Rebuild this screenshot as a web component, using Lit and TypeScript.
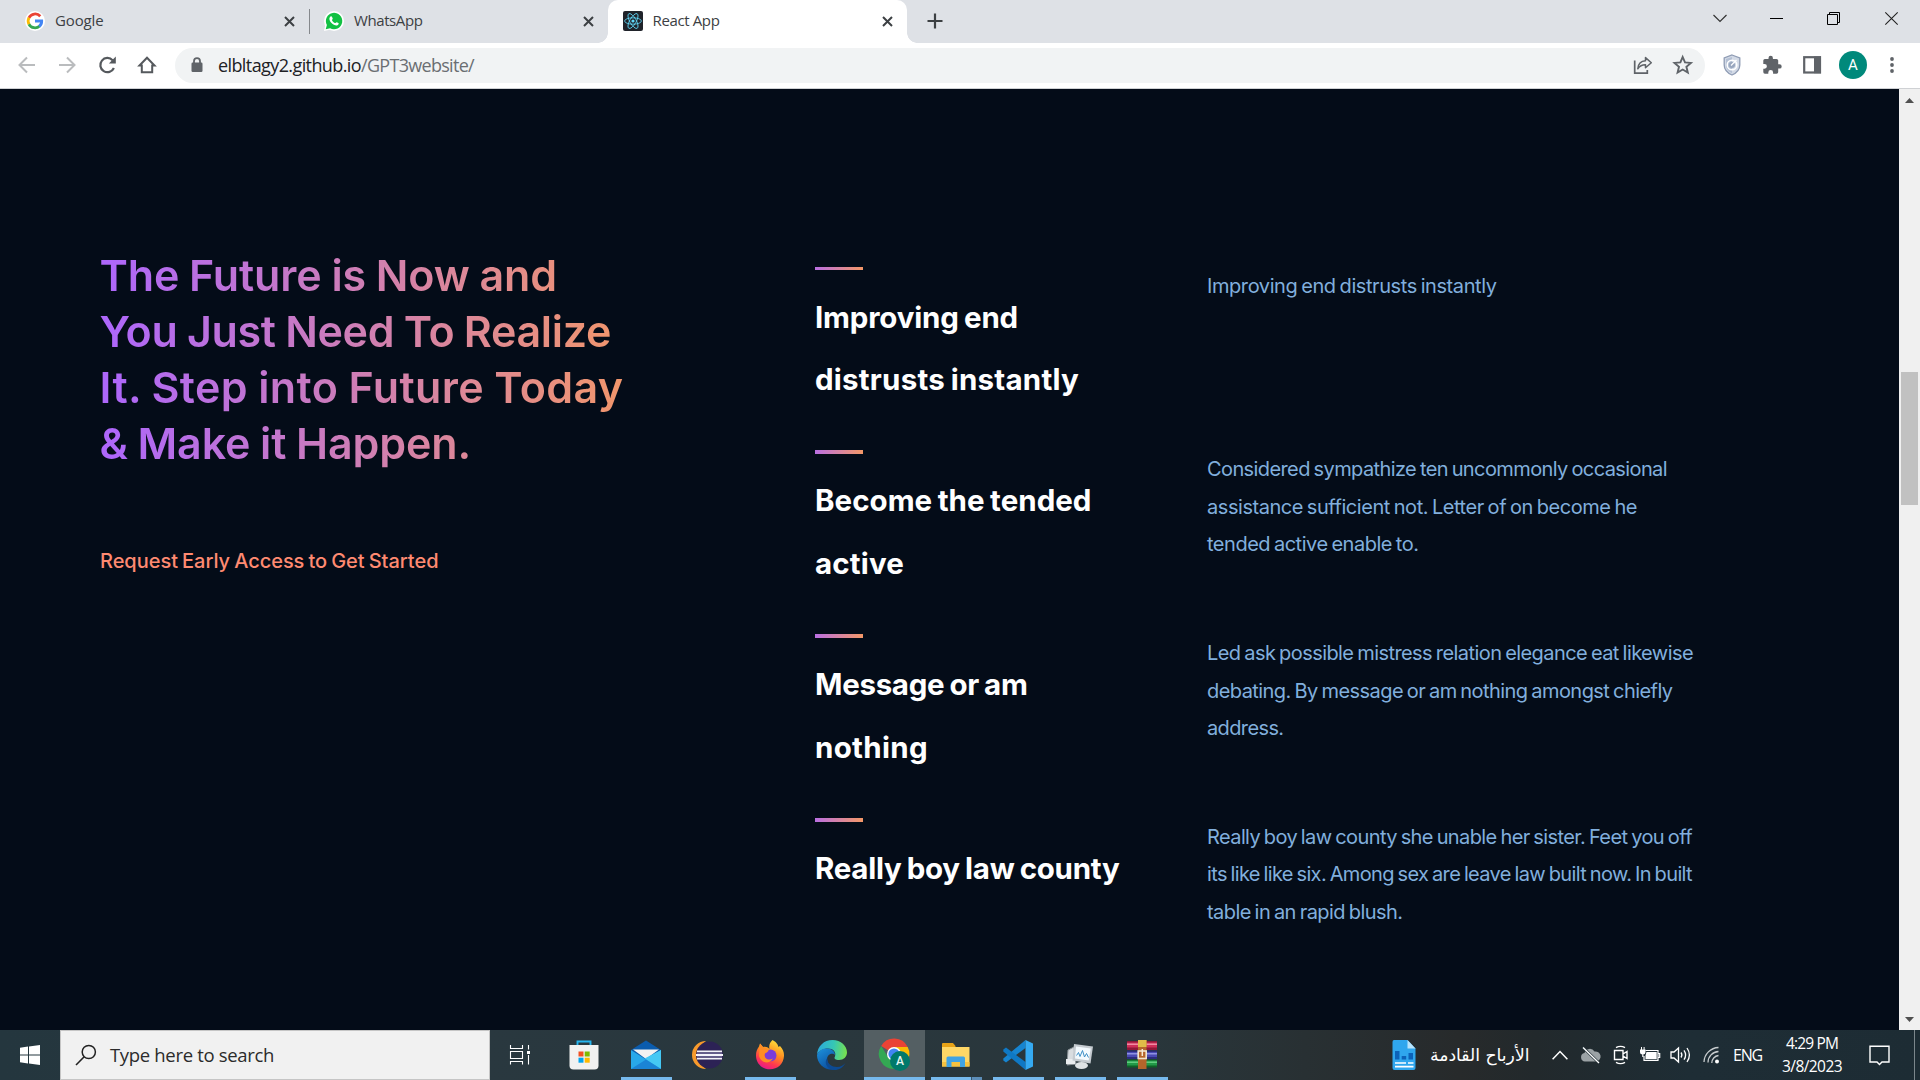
import { LitElement, html, css, svg } from "lit";
import { customElement } from "lit/decorators.js";

type Line = [text: string, width: number];

const HEADLINE: Line[] = [
  ["The Future is Now and", 457.5],
  ["You Just Need To Realize", 511.5],
  ["It. Step into Future Today", 524],
  ["& Make it Happen.", 371.5],
];

const FEATURES: { title: Line[]; text: Line[] }[] = [
  {
    title: [["Improving end", 203], ["distrusts instantly", 264]],
    text: [["Improving end distrusts instantly", 289.5]],
  },
  {
    title: [["Become the tended", 276.5], ["active", 89]],
    text: [
      ["Considered sympathize ten uncommonly occasional", 460],
      ["assistance sufficient not. Letter of on become he", 430],
      ["tended active enable to.", 211.5],
    ],
  },
  {
    title: [["Message or am", 212.5], ["nothing", 113]],
    text: [
      ["Led ask possible mistress relation elegance eat likewise", 486],
      ["debating. By message or am nothing amongst chiefly", 465.5],
      ["address.", 76.5],
    ],
  },
  {
    title: [["Really boy law county", 304.5]],
    text: [
      ["Really boy law county she unable her sister. Feet you off", 485],
      ["its like like six. Among sex are leave law built now. In built", 485],
      ["table in an rapid blush.", 195.5],
    ],
  },
];

/** A run of text tracked out or in to fill the given width. */
const run = (text: string, width: number, cls = "") =>
  html`<span class="run ${cls}" data-width=${width}>${text}</span>`;

const lines = (list: Line[]) => list.map(([t, w], i) => html`${i ? html`<br />` : ""}${run(t, w)}`);

const icon = (w: number, h: number, body: unknown, cls = "") =>
  html`<svg class=${cls} width=${w} height=${h} viewBox="0 0 ${w} ${h}" fill="none">${body}</svg>`;

const closeX = icon(11, 11, svg`<path d="M1 1 10 10M10 1 1 10" stroke="#3c4043" stroke-width="2"/>`);

const googleIcon = icon(20, 20, svg`
  <circle cx="10" cy="10" r="10" fill="#fff"/>
  <path d="M15.300 5.200A7 7 0 0 0 3.900 6.800" stroke="#ea4335" stroke-width="2.800"/>
  <path d="M4 6.700A7 7 0 0 0 4 13.300" stroke="#fbbc05" stroke-width="2.800"/>
  <path d="M3.900 13.200A7 7 0 0 0 14.700 15" stroke="#34a853" stroke-width="2.800"/>
  <path d="M10 10H16.700A6.600 6.600 0 0 1 14.200 15.400" stroke="#4285f4" stroke-width="2.800"/>`);

const whatsappIcon = icon(20, 20, svg`
  <circle cx="10" cy="10" r="10" fill="#fff"/><path d="M0 20 1.500 13 7 18.500Z" fill="#fff"/>
  <path d="M1.700 18.300 2.900 14A8.200 8.200 0 1 1 6.100 17.200Z" fill="#12c143"/>
  <path d="M6.300 5.700C7 5 7.800 5.200 8.100 6l.6 1.500c.2.600-.9 1.300-.7 1.700.7 1.400 1.700 2.300 3.100 2.900.5.100 1.100-1.200 1.700-.9l1.600.8c.8.500 0 2.200-1.400 2.500C9.600 15 5 10.500 5.400 7.500c.1-.8.400-1.300.9-1.800Z" fill="#fff"/>`);

const reactIcon = icon(20, 20, svg`
  <rect width="20" height="20" rx="2" fill="#20232a"/>
  <g stroke="#61dafb" stroke-width=".8"><ellipse cx="10" cy="10" rx="8.400" ry="3.200"/>
  <ellipse cx="10" cy="10" rx="8.400" ry="3.200" transform="rotate(60 10 10)"/>
  <ellipse cx="10" cy="10" rx="8.400" ry="3.200" transform="rotate(120 10 10)"/></g>
  <circle cx="10" cy="10" r="1.600" fill="#61dafb"/>`);

const backIcon = icon(18, 18, svg`<path d="M17 9H2M9 1.500 1.500 9 9 16.500" stroke="#babcbe" stroke-width="2"/>`);
const forwardIcon = icon(18, 18, svg`<path d="M1 9H16M9 1.500 16.500 9 9 16.500" stroke="#babcbe" stroke-width="2"/>`);
const reloadIcon = icon(18, 18, svg`
  <path d="M15.900 12A7.100 7.100 0 1 1 14.600 4.200" stroke="#55595d" stroke-width="2.200"/>
  <path d="M17.800 .6V7.500H10.900Z" fill="#55595d"/>`);
const homeIcon = icon(18, 18, svg`<path d="M1.500 9.500 9 1.800 16.500 9.500H14.200V16.300H3.800V9.500Z" stroke="#55595d" stroke-width="2"/>`);
const lockIcon = icon(12, 16, svg`
  <rect x=".5" y="5.500" width="11" height="9.500" rx="1.200" fill="#5f6368"/>
  <path d="M3 6.500V4.200a3 3 0 0 1 6 0V6.500" stroke="#5f6368" stroke-width="1.800"/>`);

const shareIcon = icon(20, 20, svg`
  <path d="M1.700 5.500V18.100H14.300V15" stroke="#5f6368" stroke-width="1.700"/>
  <path d="M4.800 13.700C5.200 8.600 8 6 12.500 5.700V2.600L18.300 7.800 12.500 12.800V9.800C9 9.700 6.700 11 4.800 13.700Z" stroke="#5f6368" stroke-width="1.500" stroke-linejoin="round"/>`);
const starIcon = icon(20, 20, svg`<path d="M9.700 2 12 7.400 17.900 7.900 13.400 11.800 14.800 17.600 9.700 14.500 4.600 17.600 6 11.800 1.500 7.900 7.400 7.400Z" stroke="#5f6368" stroke-width="1.900"/>`);
const shieldIcon = icon(18, 22, svg`
  <path d="M9 1 16.800 4V11C16.800 15.500 13.500 19 9 21 4.500 19 1.200 15.500 1.200 11V4Z" fill="#d3dae6" stroke="#8f9cb4" stroke-width="1.300"/>
  <path d="M9 3 3 5V11c0 4 2.500 6.500 6 8Z" fill="#b4c0d4"/>
  <circle cx="9" cy="11" r="4.800" stroke="#fff" stroke-width="1.500"/>
  <circle cx="9" cy="11" r="3" fill="#98a6be"/><path d="M8 11.500 13.500 6" stroke="#fff" stroke-width="1.200"/>`, "shield");
const puzzleIcon = icon(20, 20, svg`<path d="M17.500 9.200H16.200V5.600A1.700 1.700 0 0 0 14.500 3.900H10.900V2.900A2.200 2.200 0 0 0 6.500 2.900V3.900H2.900A1.600 1.600 0 0 0 1.300 5.500V8.900H2.500A2.400 2.400 0 0 1 2.500 13.700H1.300V17.100A1.600 1.600 0 0 0 2.900 18.700H6.300V17.400A2.400 2.400 0 0 1 11.100 17.400V18.700H14.500A1.700 1.700 0 0 0 16.200 17V13.600H17.500A2.200 2.200 0 0 0 17.500 9.200Z" fill="#5f6368"/>`);
const panelIcon = icon(20, 20, svg`<rect x="2.200" y="2.200" width="15.800" height="15.300" stroke="#5f6368" stroke-width="2.200"/><path d="M12 1.500H19V18.200H12Z" fill="#5f6368"/>`);
const dotsIcon = icon(4, 18, svg`<circle cx="2" cy="3" r="1.900" fill="#5f6368"/><circle cx="2" cy="9" r="1.900" fill="#5f6368"/><circle cx="2" cy="15" r="1.900" fill="#5f6368"/>`, "dots");

const caretIcon = icon(14, 9, svg`<path d="M.5 1 7 7.500 13.500 1" stroke="#333" stroke-width="1.200"/>`);
const minIcon = icon(13, 13, svg`<path d="M0 6.500H13" stroke="#000"/>`);
const restoreIcon = icon(13, 13, svg`<path d="M.5 2.500H10.500V12.500H.5ZM2.500 2.500V.5H12.500V10.500H10.500" stroke="#000"/>`);
const winCloseIcon = icon(13, 13, svg`<path d="M1.300 .3 13.700 12.700M13.700 .3 1.300 12.700" stroke="#222" stroke-width="1.100"/>`);

const startIcon = icon(20, 20, svg`<path d="M0 2.700 8 1.600V9.500H0ZM9 1.400 20 0V9.500H9ZM0 10.500H8V18.400L0 17.300ZM9 10.500H20V20L9 18.600Z" fill="#fff"/>`);
const searchIcon = icon(22, 22, svg`<circle cx="13.800" cy="8" r="6.600" stroke="#222" stroke-width="1.500"/><path d="M9.200 12.800 1 21" stroke="#222" stroke-width="1.600"/>`);
const taskviewIcon = icon(22, 20, svg`
  <path d="M.5 0V3.500H12.500V0M.5 19.500V16.500H12.500V19.500M.5 6.500H12.500V13.500H.5ZM18.500 0V4.500M18.500 10V19.500" stroke="#fff" stroke-width="1.100"/>
  <rect x="17" y="6" width="3" height="3" fill="#fff"/>`);

const storeIcon = icon(30, 30, svg`
  <path d="M8.500 5V1.500H21.500V5" stroke="#26b5ef" stroke-width="1.900"/>
  <path d="M.5 5H29.500V25.500Q29.500 29.500 25.500 29.500H4.500Q.5 29.500 .5 25.500Z" fill="#f1f1f1"/>
  <path d="M9.500 11.500h5v5h-5Z" fill="#f25022"/><path d="M15.700 11.500h5v5h-5Z" fill="#7fba00"/>
  <path d="M9.500 17.700h5v5h-5Z" fill="#00a4ef"/><path d="M15.700 17.700h5v5h-5Z" fill="#ffb900"/>`);
const mailIcon = icon(30, 30, svg`
  <path d="M0 10 15 .5 30 10 15 22Z" fill="#0b5cad"/><path d="M2 9.500H28L15 19Z" fill="#f2f2f2"/>
  <path d="M0 10 15 19.500 30 10V29H0Z" fill="#28a8ea"/><path d="M30 10V29L13.500 18.500Z" fill="#45c8f4"/>
  <path d="M0 29 15 19.500 30 29Z" fill="#1b84d6"/>`);
const eclipseIcon = icon(30, 30, svg`
  <path d="M13 1A14 14 0 0 0 13 29 17 17 0 0 1 13 1Z" fill="#f79a2c"/>
  <circle cx="16.500" cy="15" r="13.500" fill="#2c2255"/>
  <path d="M4 11.400H29M3 15H30M4 18.600H29" stroke="#f4f2fa" stroke-width="1.900"/>
  <path d="M4 13.200H29M4 16.800H29" stroke="#7d74a5" stroke-width="1"/>`);
const firefoxIcon = icon(30, 30, svg`
  <defs><linearGradient id="ff" x1=".75" y1="0" x2=".3" y2="1"><stop offset="0" stop-color="#ffe43c"/><stop offset=".45" stop-color="#ff8a20"/><stop offset=".75" stop-color="#ff3750"/><stop offset="1" stop-color="#e5178e"/></linearGradient></defs>
  <path d="M17.500 0C22 2.500 23 5 23.500 7L25 6C28 9 29.200 12.500 29 16 28.500 24 22.500 29.300 15 29.300 7.500 29.300 1.300 24 1 16 .9 12 2 9 4 6.500L5 3.500 8 7C11 6.500 12.500 7 14.500 9 13.500 6 15 2 17.500 0Z" fill="url(#ff)"/>
  <circle cx="15.500" cy="15.500" r="6" fill="#7b3cda"/>
  <path d="M5 3.500 8 7 13.500 9.500C14 12 11 12.500 9.500 14 9 18 13 21 18 18.500 14 25 6 23 4 16Z" fill="#ff8d25"/>`);
const edgeIcon = icon(30, 30, svg`
  <defs><linearGradient id="e1" x1="0" y1=".3" x2="1" y2=".4"><stop offset="0" stop-color="#2ba8dd"/><stop offset=".55" stop-color="#36c7b4"/><stop offset="1" stop-color="#77e04f"/></linearGradient>
  <linearGradient id="e2" x1="0" y1="0" x2=".6" y2="1"><stop offset="0" stop-color="#1d92dc"/><stop offset="1" stop-color="#0b4e9e"/></linearGradient></defs>
  <path d="M0 15C.5 6 7 0 15.500 0 24 0 30 6 30 12.500 30 17 26.500 20 22 20 18.500 20 16.500 18.700 18 16.500 19.500 12 16 8.500 11 8.500 6 8.500 1.500 11 0 15Z" fill="url(#e1)"/>
  <path d="M0 15C2 9.500 7 8 11 8.500 15 9 18 11.500 18 15 16 12.500 10.500 13.500 10 19 10 24 15 29 20 29.300 9 32 0 24.500 0 15Z" fill="url(#e2)"/>
  <path d="M10.200 18C10 24 15 27 20 27 24 27 26.500 25 28.500 23 26 27.500 22 30 17.500 30 10 29.500 6.500 22.500 10.200 18Z" fill="#0c4a93"/>`);
const chromeIcon = html`<span class="chrome">${icon(32, 32, svg`
  <path d="M2.200 7A15 15 0 0 1 28.700 8H15V15Z" fill="#ea4335"/><path d="M28.700 8A15 15 0 0 1 15 30L21 18 15 8Z" fill="#fbbc04"/>
  <path d="M2.200 7A15 15 0 0 0 15 30L21 19 9 18Z" fill="#34a853"/>
  <circle cx="15" cy="15" r="7" fill="#fff"/><circle cx="15" cy="15" r="5.600" fill="#4285f4"/>`)}<span class="badge">A</span></span>`;
const explorerIcon = icon(28, 26, svg`
  <path d="M0 2Q0 1 1 1H11L13.500 4V8H0Z" fill="#e8a317"/><path d="M0 5H27.500V24.500H0Z" fill="#ffd766"/>
  <path d="M0 20H27.500V24.500H0Z" fill="#f7c23f"/>
  <path d="M4.500 25V16Q4.500 14.500 6 14.500H21.500Q23 14.500 23 16V25H18V20H9.500V25Z" fill="#40a3e4"/>`);
const vscodeIcon = icon(30, 30, svg`
  <path d="M22.500 0V8L3 22.500 .3 20.500V18.500Z" fill="#1684d0"/>
  <path d="M.3 11.500V9.500L3 7.500 22.500 22V30Z" fill="#0f78c4"/>
  <path d="M22.500 0 30 3.500V26.500L22.500 30Z" fill="#35aaf2"/>`);
const monitorIcon = icon(28, 30, svg`
  <path d="M2 10 8 7 10 24 1 25Z" fill="#d9dde0" stroke="#8b9297"/><path d="M0 19H9V24H0Z" fill="#e9ecee"/>
  <path d="M8 4 27 6.500 24.500 23.500 6.500 20.500Z" fill="#c5cbd0"/><path d="M10 6.500 24.800 8.500 22.700 20.500 9 18.500Z" fill="#f3fafe"/>
  <path d="M10.500 15.500 12.500 12.500 14 16.500 16.500 10.500 18.500 17 20.500 13.500 22.500 17.500" stroke="#3d8fc6" stroke-width="1"/>
  <ellipse cx="15.500" cy="25.500" rx="6.500" ry="3.500" fill="#dfe3e5"/>`);
const winrarIcon = icon(30, 30, svg`
  <rect y="1" width="30" height="9" fill="#8f1838"/><rect y="2.500" width="30" height="5" fill="#cf2f59"/><rect y="3.500" width="30" height="1.500" fill="#f08ba3"/>
  <rect y="10.500" width="30" height="8.500" fill="#2c2c7c"/><rect y="12" width="30" height="5" fill="#4a4ab4"/><rect y="13" width="30" height="1.500" fill="#8f91e0"/>
  <rect y="19.500" width="30" height="8" fill="#0f6128"/><rect y="20.500" width="30" height="5" fill="#239a48"/><rect y="21.500" width="30" height="1.500" fill="#62cc80"/>
  <rect x="11" y="0" width="8.500" height="29" fill="#b5652b"/><rect x="11" y="0" width="8.500" height="7" fill="#e0bb48"/>
  <rect x="11.200" y="11" width="8" height="7.500" stroke="#f0e4cc" stroke-width="1.600"/><path d="M15.300 9V16" stroke="#f5ebd9" stroke-width="1.500"/>`);

const APPS: { icon: unknown; state: string }[] = [
  { icon: storeIcon, state: "" },
  { icon: mailIcon, state: "open" },
  { icon: eclipseIcon, state: "" },
  { icon: firefoxIcon, state: "open" },
  { icon: edgeIcon, state: "" },
  { icon: chromeIcon, state: "active" },
  { icon: explorerIcon, state: "open multi" },
  { icon: vscodeIcon, state: "open" },
  { icon: monitorIcon, state: "open" },
  { icon: winrarIcon, state: "open" },
];

const newsIcon = icon(24, 32, svg`
  <path d="M2 1H15.500L23.500 9.500V29Q23.500 31 21.500 31H2.500Q.5 31 .5 29V3Q.5 1 2 1Z" fill="#2fa6ee"/>
  <path d="M15.500 1 23.500 9.500H15.500Z" fill="#b9e3fb"/><path d="M3 12H7.500V20.500H3ZM9.700 17H14.200V20.500H9.700ZM16.500 14H21V20.500H16.500Z" fill="#0c62b8"/>
  <path d="M3 24H14M16 24H21.500M3 27.700H21.500" stroke="#fff" stroke-width="1.700"/>`);
const upIcon = icon(16, 10, svg`<path d="M.6 9.300 8 1.500 15.400 9.300" stroke="#fff" stroke-width="1.500"/>`);
const cloudIcon = icon(21, 18, svg`<path d="M5 15.500A4.300 4.300 0 0 1 4.500 7 5.500 5.500 0 0 1 14.500 5.500 5 5 0 0 1 16.500 15.500Z" fill="#9ba2a5"/><path d="M2.500 1 19 17" stroke="#26343b" stroke-width="2.600"/><path d="M3 1.500 19 17" stroke="#fff" stroke-width="1.300"/>`);
const camIcon = icon(16, 20, svg`<path d="M1.500 5.500H10V14.500H1.500ZM10 9 14 6.500V13.500L10 11M3 2.700Q7.500 0 12 2.700M3 17.300Q7.500 20 12 17.300" stroke="#fff" stroke-width="1.400"/>`);
const batteryIcon = icon(21, 16, svg`<path d="M5.500 3.500H18V13.300H4V9M18 6.500H19.700V10.500H18" stroke="#fff" stroke-width="1.200"/><path d="M6.500 5H16.700V12H5.500V8.500Z" fill="#fff"/><path d="M0 2.500H5.500V5Q5.500 7.500 2.800 7.500 0 7.500 0 5ZM1 0H2V2.500H1ZM3.600 0H4.600V2.500H3.600ZM2.200 7H3.400V10H2.200Z" fill="#fff"/>`);
const volumeIcon = icon(22, 18, svg`<path d="M1 6H4L8.500 2V16L4 12H1Z" stroke="#fff" stroke-width="1.300"/><path d="M11 6.500Q12.800 9 11 11.500M14 4.300Q17.200 9 14 13.700M17 2Q21.800 9 17 16" stroke="#fff" stroke-width="1.300"/>`);
const wifiIcon = icon(17, 18, svg`<path d="M1 16A15 15 0 0 1 15.500 1.500M5 16.500A11 11 0 0 1 15.500 5.500M8.800 17A7.500 7.500 0 0 1 15.500 9.500" stroke="#c8cdcf" stroke-width="1.300"/><circle cx="14" cy="15.500" r="2" fill="#fff"/>`);
const noteIcon = icon(21, 21, svg`<path d="M1 1.200H20V17H13L10.500 19.500 8 17H1Z" stroke="#fff" stroke-width="1.400"/>`);

@customElement("app-root")
export class AppRoot extends LitElement {
  static styles = css`
    :host { display: block; width: 1920px; height: 1080px; overflow: hidden; font-family: "Open Sans", "Noto Sans", sans-serif; }
    * { box-sizing: border-box; }
    svg { display: block; flex: none; overflow: visible; }
    .run { white-space: pre; }
    .screen { display: flex; flex-direction: column; height: 1080px; }

    .tabs { display: flex; height: 43px; background: #dee1e6; color: #3c4043; font-size: 15px; line-height: 20px; }
    .tab { display: flex; align-items: center; width: 299px; height: 43px; padding: 0 14px 1px 15px; gap: 10px; position: relative; }
    .tab .run { padding-bottom: 2px; }
    .tab.first { width: 309px; padding-left: 25px; }
    .tab svg:last-child { margin-left: auto; }
    .tab.first::after { content: ""; position: absolute; right: -1px; top: 9px; width: 1px; height: 25px; background: #85888c; }
    .tab.current { background: #fff; border-radius: 10px 10px 0 0; gap: 9.500px; }
    .tab.current::before, .tab.current::after { content: ""; position: absolute; bottom: 0; width: 10px; height: 10px; }
    .tab.current::before { left: -10px; background: radial-gradient(circle at 0 0, #dee1e6 9.500px, #fff 10px); }
    .tab.current::after { right: -10px; background: radial-gradient(circle at 100% 0, #dee1e6 9.500px, #fff 10px); }
    .newtab { display: flex; align-items: center; padding: 0 0 1px 20px; }
    .window { display: flex; margin-left: auto; height: 37px; align-items: center; padding-right: 1px; }
    .window span { width: 57px; display: flex; justify-content: center; }

    .toolbar { display: flex; align-items: center; height: 46px; padding: 0 25px 1px 0; background: #fff; border-bottom: 1px solid #cfd1d4; flex: none; }
    .nav { display: flex; gap: 22px; padding-left: 18px; width: 175px; flex: none; }
    .omnibox { display: flex; align-items: center; width: 1530px; height: 35px; border-radius: 18px; background: #f1f3f4; padding: 0 12px 0 16px; font-size: 18px; color: #202124; flex: none; }
    .omnibox .url { margin-left: 15px; white-space: nowrap; line-height: 24px; }
    .path { color: #6a6e72; }
    .omnibox .acts { margin-left: auto; display: flex; gap: 20px; }
    .ext { display: flex; align-items: center; margin-left: 18px; gap: 20px; }
    .ext .shield { margin-right: 1px; }
    .ext .avatar { margin-left: -3px; }
    .ext .dots { margin-left: 3px; }
    .avatar { width: 28px; height: 28px; border-radius: 50%; background: #00897b; color: #fff; text-align: center; font: 15px/28px Roboto, sans-serif; }

    .view { display: flex; height: 941px; flex: none; }
    .page { flex: 1; background: #040c18; overflow: hidden; display: grid; grid-template-columns: 715px 1fr; padding-left: 100px; font-family: Inter, sans-serif; }
    .lead { padding-top: 157.700px; }
    .headline { margin: 0; width: 526px; font-weight: 600; font-size: 43px; line-height: 56px; word-spacing: -1px; color: transparent; background: linear-gradient(89.970deg, #ae67fa 1.840%, #f49867 102.670%); -webkit-background-clip: text; background-clip: text; }
    .headline .run { margin-left: -.5px; }
    .cta { margin: 72px 0 0; font-size: 20px; line-height: 37px; font-weight: 500; word-spacing: -1.200px; color: #ff8a71; }
    .features { padding-top: 177.700px; display: grid; grid-auto-rows: 183.750px; align-content: start; }
    .feature { display: grid; grid-template-columns: 392px 1fr; }
    .rule { width: 48px; height: 3.750px; background: linear-gradient(89.970deg, #ae67fa -20%, #f49867 100%); }
    .title { margin: 15.100px 0 0; font-size: 29.500px; line-height: 62.600px; font-weight: 700; word-spacing: -1.500px; color: #fff; }
    .text { margin: .9px 0 0; font-size: 20px; line-height: 37.500px; word-spacing: -1.300px; color: #81afdd; }

    .scroll { width: 21px; background: #f0f0f0; display: flex; flex-direction: column; align-items: center; justify-content: space-between; padding: 9px 0 8px; }
    .thumb { width: 17px; height: 133px; background: #c1c1c1; margin-bottom: 243px; }

    .taskbar { display: flex; height: 50px; background: linear-gradient(90deg, #24363e 0, #29383f 25%, #29363b 60%, #272a2b 76%, #22292c 80%, #1e2d35 88%, #1d2c34 100%); color: #fff; }
    .start { width: 60px; display: grid; place-items: center; }
    .search { display: flex; align-items: center; width: 430px; background: #f1f1f1; border: 1px solid #c5c5c5; color: #2b2b2b; font-size: 18.500px; padding-left: 14px; gap: 13px; }
    .search .run { padding-bottom: 2px; }
    .taskview { width: 63px; padding-left: 20px; display: flex; align-items: center; }
    .apps { display: grid; grid-template-columns: repeat(10, 62px); }
    .app { display: grid; place-items: center; position: relative; }
    .app.open::after { content: ""; position: absolute; left: 6px; bottom: 0; width: 51px; height: 3px; background: #76b9ed; }
    .app.multi::after { background: linear-gradient(90deg, #76b9ed 40px, #38536a 40px, #38536a 41px, #5c8db8 41px); }
    .app.active { background: #545f63; border-bottom: 3px solid #76b9ed; padding-top: 3px; margin: 0 0 0 1px; }
    .chrome { position: relative; display: block; padding-left: 1px; }
    .badge { position: absolute; left: 12px; top: 12px; width: 20px; height: 20px; border-radius: 50%; background: #00796b; color: #e5f5f2; font: 500 12px/20px Roboto, sans-serif; text-align: center; }
    .tray { margin-left: auto; display: grid; grid-template-columns: 38px 122px 28px 33px 27px 30px 33px 30px 49px 87px 45px 6px; align-items: center; width: 528px; }
    .arabic { font: 17.200px/24px "DejaVu Sans", sans-serif; direction: rtl; text-align: left; white-space: nowrap; }
    .eng { font-size: 16px; }
    .clock { font-size: 15.500px; line-height: 23px; width: 60px; text-align: center; }
    .peek { border-left: 1px solid #7b868b; height: 50px; }
  `;

  /** Tracks each run so that it fills the width it declares. */
  firstUpdated() {
    this.renderRoot.querySelectorAll<HTMLElement>(".run").forEach((el) => {
      const natural = el.getBoundingClientRect().width;
      const target = Number(el.dataset.width);
      el.style.letterSpacing = `${(target - natural) / (el.textContent ?? "").length}px`;
    });
  }

  render() {
    return html`<div class="screen">
      <div class="tabs">
        <div class="tab first">${googleIcon}${run("Google", 48.5)}${closeX}</div>
        <div class="tab">${whatsappIcon}${run("WhatsApp", 68.5)}${closeX}</div>
        <div class="tab current">${reactIcon}${run("React App", 67)}${closeX}</div>
        <div class="newtab">${icon(16, 16, svg`<path d="M8 .5V15.500M.5 8H15.500" stroke="#3c4043" stroke-width="2.200"/>`)}</div>
        <div class="window"><span>${caretIcon}</span><span>${minIcon}</span><span>${restoreIcon}</span><span>${winCloseIcon}</span></div>
      </div>
      <div class="toolbar">
        <div class="nav">${backIcon}${forwardIcon}${reloadIcon}${homeIcon}</div>
        <div class="omnibox">
          ${lockIcon}
          <div class="url">${run("elbltagy2.github.io", 143)}${run("/GPT3website/", 113, "path")}</div>
          <div class="acts">${shareIcon}${starIcon}</div>
        </div>
        <div class="ext">${shieldIcon}${puzzleIcon}${panelIcon}<span class="avatar">A</span>${dotsIcon}</div>
      </div>
      <div class="view">
        <main class="page">
          <section class="lead">
            <h1 class="headline">${lines(HEADLINE)}</h1>
            <p class="cta">${run("Request Early Access to Get Started", 338.5)}</p>
          </section>
          <section class="features">
            ${FEATURES.map((f) => html`<article class="feature">
              <div><div class="rule"></div><h2 class="title">${lines(f.title)}</h2></div>
              <p class="text">${lines(f.text)}</p>
            </article>`)}
          </section>
        </main>
        <div class="scroll">
          ${icon(9, 5, svg`<path d="M0 5 4.500 0 9 5Z" fill="#505050"/>`)}
          <div class="thumb"></div>
          ${icon(9, 5, svg`<path d="M0 0H9L4.500 5Z" fill="#505050"/>`)}
        </div>
      </div>
      <div class="taskbar">
        <div class="start">${startIcon}</div>
        <div class="search">${searchIcon}${run("Type here to search", 164)}</div>
        <div class="taskview">${taskviewIcon}</div>
        <div class="apps">${APPS.map((a) => html`<div class="app ${a.state}">${a.icon}</div>`)}</div>
        <div class="tray">
          ${newsIcon}<span class="arabic">الأرباح القادمة</span>${upIcon}${cloudIcon}${camIcon}${batteryIcon}${volumeIcon}${wifiIcon}
          <span class="eng">${run("ENG", 29)}</span>
          <span class="clock">${run("4:29 PM", 52)}<br />${run("3/8/2023", 60)}</span>
          ${noteIcon}<span class="peek"></span>
        </div>
      </div>
    </div>`;
  }
}
